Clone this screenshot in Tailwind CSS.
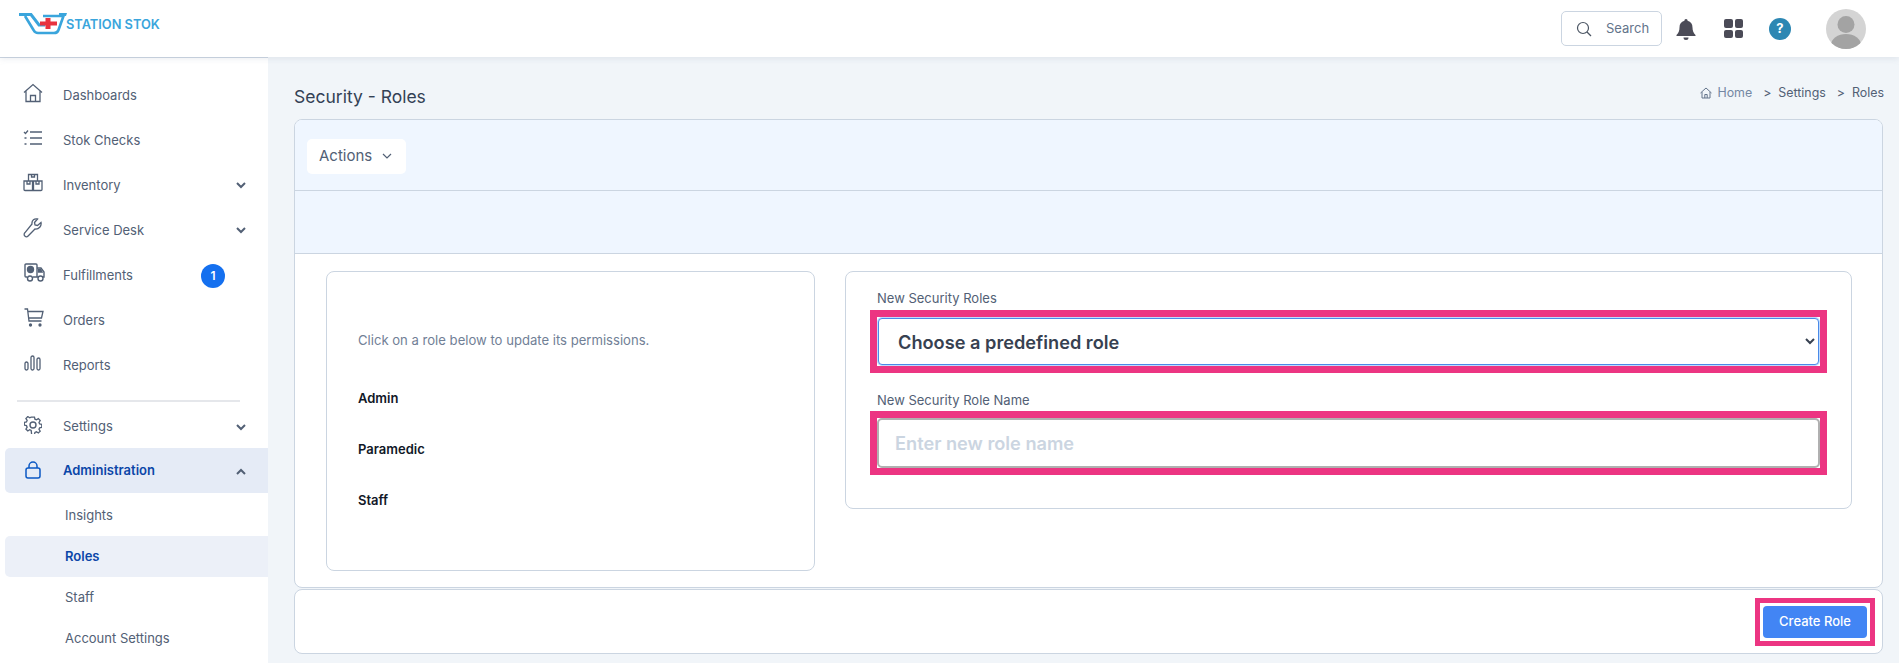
<!DOCTYPE html>
<html lang="en">

<head>
    <meta charset="UTF-8" />
    <meta name="viewport" content="width=device-width, initial-scale=1.0" />
    <title>Security - Roles</title>
    <script src="https://cdn.jsdelivr.net/npm/@tailwindcss/browser@4"></script>
</head>

<body class="h-screen overflow-hidden bg-[#f1f5f9] font-['Inter',sans-serif] text-[#526075]">
    <!-- top bar -->
    <header class="h-[57px] bg-white flex items-center shadow-[0_2px_6px_rgba(148,163,184,0.18)] relative z-10">
        <div class="flex items-center pl-[19px] pb-[8px]">
            <svg width="48" height="23" viewBox="0 0 48 23" fill="none">
                <path d="M0 1.500H12L20 12H26" stroke="#3aa5dc" stroke-width="3" />
                <path d="M6 3L14.500 17Q16 20 19 20H35Q38.500 20 39.500 17L44.500 3H24" stroke="#3aa5dc" stroke-width="2.600" />
                <path d="M40 0H48L47 3H40z" fill="#3aa5dc" />
                <path d="M26.500 5h5v3.500H38v4h-6.500V16h-5v-3.500H21v-4h5.500z" fill="#e8333f" />
            </svg>
            <span class="font-semibold text-[12.800px] text-[#3aa5dc] -ml-[1px]">STATION STOK</span>
        </div>
        <div class="ml-auto flex items-center">
            <div class="w-[101px] h-[35px] border border-[#cbd5e1] rounded-[5px] flex items-center pl-[14px] text-[13px] text-[#64748b]">
                <svg width="16" height="16" viewBox="0 0 16 16" fill="none" stroke="#4b5563" stroke-width="1.200"><circle cx="7" cy="7" r="5.500" /><path d="M11 11l4 4" /></svg>
                <span class="ml-[14px]">Search</span>
            </div>
            <svg class="ml-[13px]" width="22" height="24" viewBox="0 0 22 24" fill="#4b4b57"><path d="M11 2a1.600 1.600 0 0 1 1.600 1.700C16 4.500 17.500 7 17.500 10.500c0 3.500 1 5.500 3 7.500v1H1.500v-1c2-2 3-4 3-7.500C4.500 7 6 4.500 9.400 3.700A1.600 1.600 0 0 1 11 2z" /><path d="M8.500 20.500h5a2.500 2.500 0 0 1-5 0z" /></svg>
            <div class="ml-[27px] grid grid-cols-2 gap-[2px]">
                <span class="w-[8.500px] h-[8.500px] rounded-[2px] bg-[#4b4b57]"></span>
                <span class="w-[8.500px] h-[8.500px] rounded-[2px] bg-[#4b4b57]"></span>
                <span class="w-[8.500px] h-[8.500px] rounded-[2px] bg-[#4b4b57]"></span>
                <span class="w-[8.500px] h-[8.500px] rounded-[2px] bg-[#4b4b57]"></span>
            </div>
            <div class="ml-[26px] w-[22px] h-[22px] rounded-full bg-[#2d87b3] text-white text-[13px] font-bold flex items-center justify-center">?</div>
            <svg class="ml-[35px] mr-[33px]" width="40" height="40" viewBox="0 0 40 40">
                <defs><clipPath id="avatar"><circle cx="20" cy="20" r="20" /></clipPath></defs>
                <circle cx="20" cy="20" r="20" fill="#d4d4d4" />
                <g clip-path="url(#avatar)" fill="#a3a3a3"><circle cx="20" cy="15.500" r="8.500" /><ellipse cx="20" cy="36" rx="15" ry="11" /></g>
            </svg>
        </div>
    </header>

    <div class="flex h-[606px]">
        <!-- side nav -->
        <aside class="w-[268px] shrink-0 bg-white border-t border-[#cbd5e1] text-[13px] pl-[5px] pt-[15px] overflow-hidden">
            <a class="h-[45px] flex items-center">
                <svg class="ml-[18px] w-[20px] mb-[5px]" height="20" viewBox="0 0 20 20" fill="none" stroke="#526075" stroke-width="1.300"><path d="M1 9.500L10 1.500l9 8M3 8v10.500h14V8M7.500 18.500v-6h5v6" /></svg>
                <span class="ml-[20px]">Dashboards</span>
            </a>
            <a class="h-[45px] flex items-center">
                <svg class="ml-[18px] w-[20px] mb-[5px]" height="20" viewBox="0 0 20 20" fill="none" stroke="#526075" stroke-width="1.300"><path d="M1 4l1.500 1.500L5 2.500M1.500 10h2M1.500 16h2M7 4h12M7 10h12M7 16h12" /></svg>
                <span class="ml-[20px]">Stok Checks</span>
            </a>
            <a class="h-[45px] flex items-center">
                <svg class="ml-[18px] w-[20px] mb-[5px]" height="20" viewBox="0 0 20 20" fill="none" stroke="#526075" stroke-width="1.300"><path d="M5.500 8V1.500h9V8M8.500 1.500V4h3V1.500M1 8h8.500v9.500H2a1 1 0 0 1-1-1zM10.500 8H19v8.500a1 1 0 0 1-1 1h-7.500zM4 8v3h3V8M13 8v3h3V8" /></svg>
                <span class="ml-[20px]">Inventory</span>
                <svg class="ml-auto mr-[22px]" width="10" height="7" viewBox="0 0 10 7" fill="none" stroke="#526075" stroke-width="2"><path d="M1 1l4 4 4-4" /></svg>
            </a>
            <a class="h-[45px] flex items-center">
                <svg class="ml-[18px] w-[20px] mb-[5px]" height="20" viewBox="0 0 20 20" fill="none" stroke="#526075" stroke-width="1.300"><path d="M18 4.500l-3.500 3-2.500-.5-.5-2.500 3-3.500c-3-.8-6 1.200-5.500 5L1.800 14.800a2.200 2.200 0 0 0 3.300 3.200L12 11c3.800.5 6.800-3 6-6.500z" /></svg>
                <span class="ml-[20px]">Service Desk</span>
                <svg class="ml-auto mr-[22px]" width="10" height="7" viewBox="0 0 10 7" fill="none" stroke="#526075" stroke-width="2"><path d="M1 1l4 4 4-4" /></svg>
            </a>
            <a class="h-[45px] flex items-center">
                <svg class="ml-[19px] w-[21px] mb-[5px]" height="20" viewBox="0 0 21 20" fill="none" stroke="#526075" stroke-width="1.400"><path d="M3 14H2a1 1 0 0 1-1-1V2a1 1 0 0 1 1-1h10a1 1 0 0 1 1 1v12H9M13 5h4l3 4v5h-1M13 14h1" /><circle cx="6" cy="15.500" r="2.500" /><circle cx="16.500" cy="15.500" r="2.500" /><circle cx="6.500" cy="6.500" r="3" fill="#526075" /><path d="M14.500 6.500h2l1.500 2.500h-3.500z" fill="#526075" /></svg>
                <span class="ml-[18px]">Fulfillments</span>
                <span class="ml-[68px] w-[24px] h-[24px] rounded-full bg-[#1570ef] text-white text-[12px] font-semibold flex items-center justify-center">1</span>
            </a>
            <a class="h-[45px] flex items-center">
                <svg class="ml-[19px] w-[20px] mb-[5px]" height="20" viewBox="0 0 20 20" fill="none" stroke="#526075" stroke-width="1.300"><path d="M0.500 1h3l1.500 12h12.500M4 3.500h15l-1.500 6.500H4.800" /><circle cx="6.500" cy="17" r="1" fill="#526075" /><circle cx="16" cy="17" r="1" fill="#526075" /></svg>
                <span class="ml-[19px]">Orders</span>
            </a>
            <a class="h-[45px] flex items-center">
                <svg class="ml-[19px] w-[17px] mb-[5px]" height="16" viewBox="0 0 17 16" fill="none" stroke="#526075" stroke-width="1.300"><rect x="1" y="7" width="3" height="8" rx="1.500" /><rect x="7" y="1" width="3" height="14" rx="1.500" /><rect x="13" y="3" width="3" height="12" rx="1.500" /></svg>
                <span class="ml-[22px]">Reports</span>
            </a>
            <div class="ml-[12px] w-[223px] h-[2px] mt-[12px] bg-[#e5e7eb]"></div>
            <a class="h-[44px] mt-[2px] pt-[2px] flex items-center">
                <svg class="ml-[19px] w-[18px] mb-[4px]" height="18" viewBox="0 0 18 18" fill="none" stroke="#526075" stroke-width="1.400"><path d="M7.500 1h3l.5 2.300 1.600.7 2-1.300 2 2.100-1.300 2 .7 1.600 2.300.5v3l-2.300.5-.7 1.600 1.300 2-2 2-2-1.300-1.600.7-.5 2.300h-3L7 15.200l-1.600-.7-2 1.300-2-2 1.300-2-.7-1.600L-.3 9.700v-3L2 6.200l.7-1.600-1.300-2 2-2.100 2 1.300L7 1z" transform="translate(.6 .1) scale(.94)" /><circle cx="9" cy="9" r="3" /></svg>
                <span class="ml-[21px]">Settings</span>
                <svg class="ml-auto mr-[22px]" width="10" height="7" viewBox="0 0 10 7" fill="none" stroke="#526075" stroke-width="2"><path d="M1 1l4 4 4-4" /></svg>
            </a>
            <a class="h-[45px] pt-[1px] flex items-center bg-[#e5ebf6] rounded-l-[5px] font-semibold text-[#0b46a8]">
                <svg class="ml-[20px] w-[16px] mb-[3px]" height="18" viewBox="0 0 16 18" fill="none" stroke="#0b58c4" stroke-width="1.500"><rect x="1" y="7" width="14" height="10" rx="2" /><path d="M4 7V5a4 4 0 0 1 8 0v2" /></svg>
                <span class="ml-[22px]">Administration</span>
                <svg class="ml-auto mr-[22px]" width="10" height="7" viewBox="0 0 10 7" fill="none" stroke="#526075" stroke-width="2"><path d="M1 6l4-4 4 4" /></svg>
            </a>
            <a class="h-[41px] mt-[2px] flex items-center pl-[60px]">Insights</a>
            <a class="h-[41px] flex items-center pl-[60px] bg-[#ecf0f8] rounded-l-[5px] font-semibold text-[#0b46a8]">Roles</a>
            <a class="h-[41px] flex items-center pl-[60px]">Staff</a>
            <a class="h-[41px] flex items-center pl-[60px]">Account Settings</a>
        </aside>

        <!-- page -->
        <main class="flex-1 min-w-0 pl-[26px] pr-[16px]">
            <div class="h-[62px] flex items-center justify-between pt-[18px]">
                <h1 class="text-[17.500px] text-[#334155]">Security - Roles</h1>
                <nav class="flex items-center text-[12.400px] mb-[8px] -mr-[1px] text-[#526075]">
                    <svg width="12" height="12" viewBox="0 0 12 12" fill="none" stroke="#64748b" stroke-width="1"><path d="M.5 6L6 1l5.500 5M2 5v6h8V5M4.800 11V7.500h2.400V11" /></svg>
                    <span class="ml-[5px] text-[#7487a3]">Home</span>
                    <span class="ml-[11px]">&gt;</span>
                    <span class="ml-[7px]">Settings</span>
                    <span class="ml-[11px]">&gt;</span>
                    <span class="ml-[7px]">Roles</span>
                </nav>
            </div>

            <section class="h-[469px] border border-[#cbd5e1] rounded-[8px] bg-white overflow-hidden">
                <div class="h-[71px] bg-[#eff6ff] border-b border-[#cbd5e1] flex items-center pl-[12px] pt-[3px]">
                    <button class="w-[99px] h-[35px] bg-white rounded-[5px] flex items-center pl-[12px] text-[15px] text-[#526075]">
                        Actions
                        <svg class="ml-[10px]" width="10" height="7" viewBox="0 0 10 7" fill="none" stroke="#526075" stroke-width="1.200"><path d="M1 1l4 4 4-4" /></svg>
                    </button>
                </div>
                <div class="h-[63px] bg-[#eff6ff] border-b border-[#cbd5e1]"></div>
                <div class="flex items-start pt-[17px] pl-[31px] pr-[30px] gap-[30px]">
                    <div class="w-[489px] h-[300px] shrink-0 border border-[#cbd5e1] rounded-[8px] pl-[31px] pt-[58px]">
                        <p class="text-[13.100px] text-[#718096] leading-[20px]">Click on a role below to update its permissions.</p>
                        <ul class="mt-[38px] text-[13px] font-semibold text-[#111827]">
                            <li class="h-[51px] leading-[20px]">Admin</li>
                            <li class="h-[51px] leading-[20px]">Paramedic</li>
                            <li class="h-[51px] leading-[20px]">Staff</li>
                        </ul>
                    </div>
                    <div class="flex-1 h-[238px] border border-[#cbd5e1] rounded-[8px] pl-[31px] pr-[31px] pt-[18px]">
                        <label class="block text-[13px] leading-[16px] mb-[4px]">New Security Roles</label>
                        <div class="-mx-[7px] border-[7px] border-[#ec3582] bg-white p-[1px]">
                            <select class="block w-full h-[47px] pl-[15px] pr-[2px] border border-[#4a8ae8] rounded-[4px] bg-white text-[18.200px] font-semibold text-[#374151] appearance-auto shadow-[0_0_0_1px_#bfdbfe]">
                                <option>Choose a predefined role</option>
                            </select>
                        </div>
                        <label class="block text-[13px] leading-[16px] mt-[19px] mb-[3px]">New Security Role Name</label>
                        <div class="-mx-[7px] border-[7px] border-[#ec3582] bg-white">
                            <input class="block w-full h-[50px] px-[16px] border-2 border-[#b0b0b0] rounded-[5px] bg-white text-[18.200px] font-semibold placeholder:text-[#cbd5e1]" placeholder="Enter new role name" />
                        </div>
                    </div>
                </div>
            </section>

            <section class="h-[65px] mt-[1px] border border-[#cbd5e1] rounded-[8px] bg-white flex items-center justify-end pr-[7px]">
                <div class="border-[5px] border-[#ec3582] p-[3px]">
                    <button class="w-[104px] h-[32px] rounded-[4px] bg-[#4285f4] text-white text-[13px] font-medium">Create Role</button>
                </div>
            </section>
        </main>
    </div>
</body>

</html>
